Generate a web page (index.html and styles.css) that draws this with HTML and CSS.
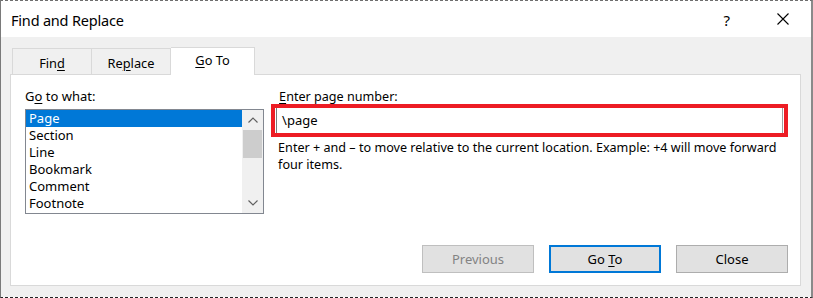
FILE: index.html
```html
<!DOCTYPE html>
<html>
<head>
<meta charset="utf-8">
<link rel="stylesheet" href="styles.css">
</head>
<body>
<div class="window">
  <div class="titlebar">
    <span class="title">Find and Replace</span>
    <span class="help">?</span>
    <span class="close-x">
      <svg width="12" height="12" viewBox="0 0 12 12"><path d="M0.5 0.5 L11.5 11.5 M11.5 0.5 L0.5 11.5" stroke="#000" stroke-width="1.1" fill="none"/></svg>
    </span>
  </div>
  <div class="body">
    <div class="tabs">
      <div class="tab tab-find"><span>Fin<u>d</u></span></div>
      <div class="tab tab-replace"><span>Re<u>p</u>lace</span></div>
      <div class="tab tab-goto active"><span><u>G</u>o To</span></div>
    </div>
    <div class="panel">
      <div class="columns">
        <div class="left">
          <div class="label">G<u>o</u> to what:</div>
          <div class="listbox">
            <div class="items">
              <div class="item selected">Page</div>
              <div class="item">Section</div>
              <div class="item">Line</div>
              <div class="item">Bookmark</div>
              <div class="item">Comment</div>
              <div class="item">Footnote</div>
            </div>
            <div class="scrollbar">
              <div class="arrow">
                <svg width="10" height="6" viewBox="0 0 10 6"><path d="M0.5 5.5 L5 1 L9.5 5.5" stroke="#606060" stroke-width="1.2" fill="none"/></svg>
              </div>
              <div class="track"><div class="thumb"></div></div>
              <div class="arrow">
                <svg width="10" height="6" viewBox="0 0 10 6"><path d="M0.5 0.5 L5 5 L9.5 0.5" stroke="#606060" stroke-width="1.2" fill="none"/></svg>
              </div>
            </div>
          </div>
        </div>
        <div class="right">
          <div class="label label-right"><u>E</u>nter page number:</div>
          <div class="highlight">
            <div class="input">\page</div>
          </div>
          <div class="hint">Enter + and – to move relative to the current location. Example: +4 will move forward four items.</div>
        </div>
      </div>
      <div class="buttons">
        <div class="btn disabled"><span>Previous</span></div>
        <div class="btn default"><span>Go <u>T</u>o</span></div>
        <div class="btn"><span>Close</span></div>
      </div>
    </div>
  </div>
</div>
</body>
</html>
```
FILE: styles.css
```css
html, body {
  margin: 0;
  padding: 0;
  background: #ffffff;
}
body {
  font-family: "Noto Sans", "Open Sans", sans-serif;
  font-size: 13px;
  color: #000;
}
u {
  text-decoration: underline;
  text-underline-offset: 2px;
  text-decoration-thickness: 1px;
}
.window {
  width: 813px;
  height: 298px;
  box-sizing: border-box;
  border-top: 1px dashed #6e6e6e;
  border-left: 1px solid #7a7a7a;
  border-right: 2px solid #8a8a8a;
  border-bottom: 1px dashed #222;
  display: flex;
  flex-direction: column;
  overflow: hidden;
}
.titlebar {
  height: 36px;
  background: #fff;
  display: flex;
  align-items: center;
  padding-left: 10px;
  flex-shrink: 0;
}
.title {
  font-size: 14.5px;
  letter-spacing: -0.2px;
  flex: 1;
  padding-top: 2px;
}
.help {
  font-size: 15px;
  margin-right: 47px;
  padding-top: 1px;
}
.close-x {
  display: flex;
  margin-right: 22px;
}
.body {
  flex: 1;
  background: #f0f0f0;
  padding: 10px 10px 0 9px;
  display: flex;
  flex-direction: column;
}
.tabs {
  display: flex;
  align-items: flex-end;
  height: 28px;
  margin-left: 2px;
  margin-bottom: -1px;
  position: relative;
  z-index: 1;
}
.tab {
  box-sizing: border-box;
  height: 26px;
  border: 1px solid #d9d9d9;
  border-bottom: none;
  background: #f0f0f0;
  display: flex;
  align-items: center;
  justify-content: center;
  font-size: 12.8px;
  margin-bottom: 1px;
  padding-top: 2px;
}
.tab-find { width: 79px; border-right: none; }
.tab-replace { width: 80px; }
.tab-goto { width: 84px; }
.tab.active {
  height: 28px;
  background: #fff;
  margin-bottom: 0;
  border-left: none;
  padding-top: 0;
  padding-bottom: 3px;
}
.panel {
  box-sizing: border-box;
  width: 791px;
  height: 212px;
  background: #fff;
  border: 1px solid #d9d9d9;
  padding: 13px 12px 12px 14px;
  display: flex;
  flex-direction: column;
}
.columns {
  display: flex;
  gap: 7px;
  flex: 1;
}
.left {
  width: 241px;
}
.label {
  line-height: 17px;
  margin-bottom: 4px;
}
.label-right {
  font-size: 12.6px;
  margin-bottom: -1px;
  padding-left: 8px;
}
.listbox {
  box-sizing: border-box;
  height: 105px;
  border: 1px solid #828790;
  display: flex;
}
.items {
  flex: 1;
}
.item {
  height: 17px;
  line-height: 17px;
  padding-left: 3px;
}
.item.selected {
  background: #0078d7;
  color: #fff;
}
.scrollbar {
  width: 21px;
  background: #f0f0f0;
  display: flex;
  flex-direction: column;
}
.arrow {
  height: 20px;
  display: flex;
  align-items: center;
  justify-content: center;
}
.track {
  flex: 1;
  padding: 0 1px;
}
.thumb {
  height: 28px;
  background: #cdcdcd;
}
.right {
  width: 521px;
}
.highlight {
  box-sizing: border-box;
  height: 33px;
  border: 4px solid #ed1c24;
  padding: 0 1px;
}
.input {
  box-sizing: border-box;
  height: 25px;
  border-left: 1px solid #7a7a7a;
  border-right: 1px solid #a0a0a0;
  line-height: 24px;
  padding-left: 5px;
}
.hint {
  font-size: 12.6px;
  line-height: 17px;
  padding-left: 7px;
  margin-top: 2px;
}
.buttons {
  display: flex;
  justify-content: flex-end;
  gap: 15px;
}
.btn {
  box-sizing: border-box;
  width: 112px;
  height: 28px;
  background: #e1e1e1;
  border: 1px solid #adadad;
  display: flex;
  align-items: center;
  justify-content: center;
}
.btn.disabled {
  color: #838383;
  border-color: #bfbfbf;
}
.btn.default {
  border: 2px solid #0078d7;
}
```
